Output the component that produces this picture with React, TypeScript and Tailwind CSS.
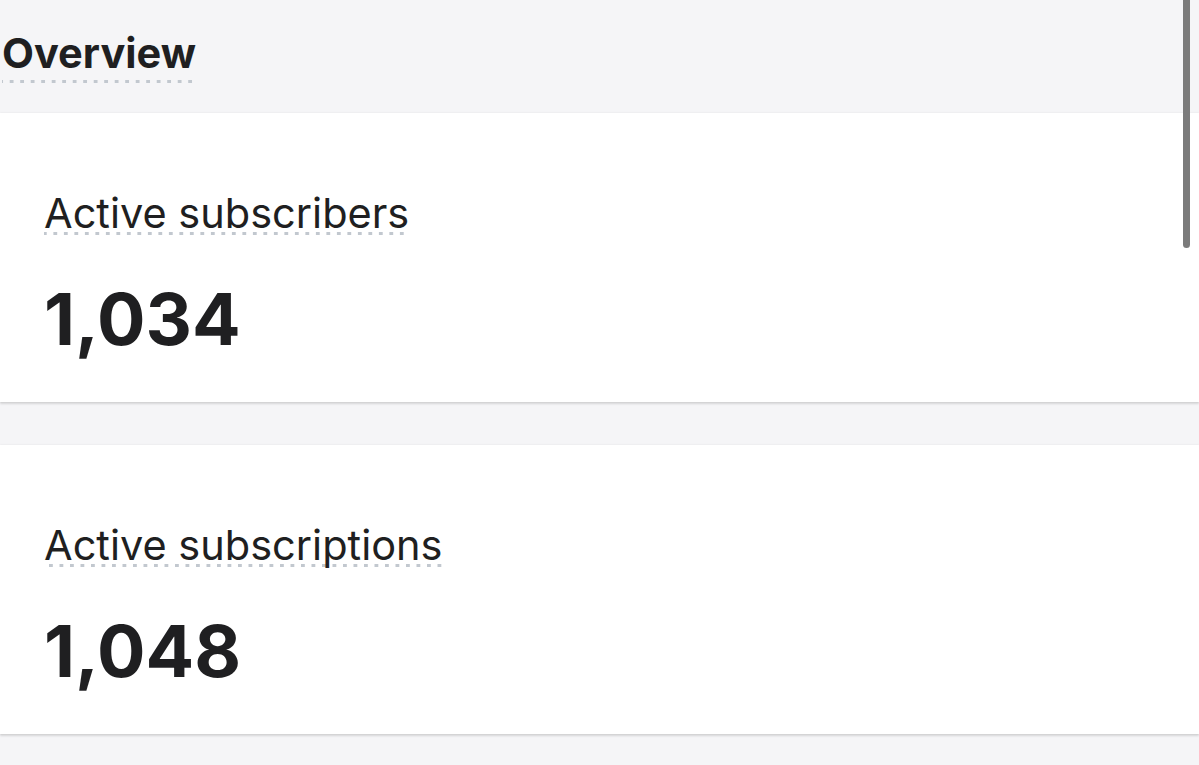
export default function App() {
  const stats = [
    { label: 'Active subscribers', value: '1,034' },
    { label: 'Active subscriptions', value: '1,048' },
  ]

  const dotted =
    'bg-[linear-gradient(to_right,#c2c8cf_0,#c2c8cf_4px,transparent_4px)] bg-[length:10.5px_3px] bg-repeat-x bg-bottom'

  return (
    <div className="relative h-[765px] overflow-hidden bg-[#f5f5f7] font-['Inter',sans-serif] text-[#1f1f21]">
      <div className="h-[113px] pl-[2px] pt-[31px]">
        <h1 className={`w-fit pb-2 text-[41.5px] font-bold leading-[44px] ${dotted}`}>Overview</h1>
      </div>

      <div className="flex flex-col gap-[43px]">
        {stats.map((stat) => (
          <div
            key={stat.label}
            className="h-[289px] bg-white pl-[44px] pt-[78px] shadow-[0_0_2px_rgba(0,0,0,0.08),0_2px_2px_rgba(0,0,0,0.12)]"
          >
            <div className={`w-fit text-[41.5px] font-normal leading-[44px] ${dotted}`}>{stat.label}</div>
            <div className="mt-[48px] text-[72px] font-bold leading-none">{stat.value}</div>
          </div>
        ))}
      </div>

      {/* overlay scrollbar */}
      <div className="absolute right-[9px] top-0 h-[248px] w-[7px] rounded-b-full bg-[#7b7b7b]" />
    </div>
  )
}
